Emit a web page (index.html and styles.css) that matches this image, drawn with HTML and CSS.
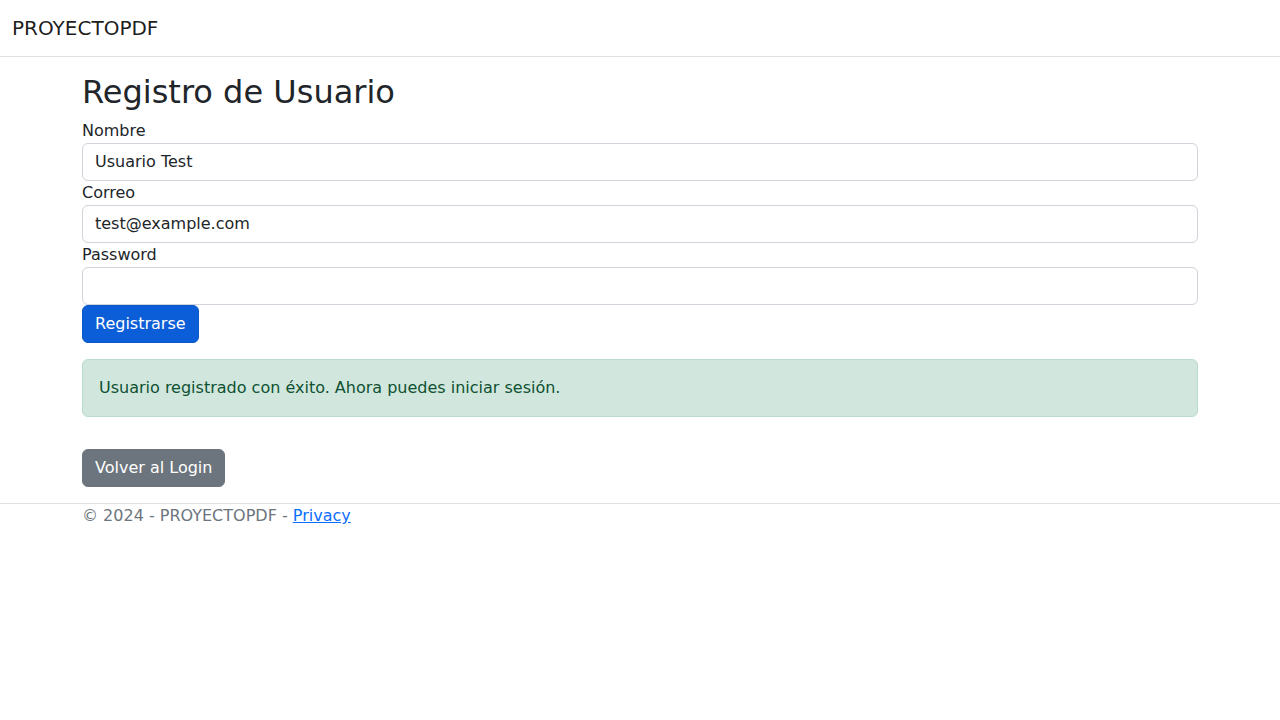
FILE: index.html
```html
<!DOCTYPE html>
<html lang="es">
<head>
<meta charset="utf-8">
<title>Registro de Usuario - PROYECTOPDF</title>
<link rel="stylesheet" href="styles.css">
</head>
<body>
<header class="site-header">
  <nav class="navbar">
    <a class="brand" href="#">PROYECTOPDF</a>
  </nav>
</header>
<div class="container">
  <main class="main">
    <h2 class="title">Registro de Usuario</h2>
    <form class="form">
      <div class="field">
        <label class="label">Nombre</label>
        <input class="input" type="text" value="Usuario Test">
      </div>
      <div class="field">
        <label class="label">Correo</label>
        <input class="input" type="email" value="test@example.com">
      </div>
      <div class="field">
        <label class="label">Password</label>
        <input class="input" type="password" value="">
      </div>
      <div class="actions">
        <button type="button" class="btn btn-primary">Registrarse</button>
      </div>
    </form>
    <div class="alert">Usuario registrado con éxito. Ahora puedes iniciar sesión.</div>
    <div class="back">
      <a class="btn btn-secondary" href="#">Volver al Login</a>
    </div>
  </main>
</div>
<footer class="footer">
  <div class="container">© 2024 - PROYECTOPDF - <a href="#" class="link">Privacy</a></div>
</footer>
</body>
</html>
```
FILE: styles.css
```css
* { box-sizing: border-box; }
html, body { margin: 0; padding: 0; }
body {
  font-family: "DejaVu Sans", "Noto Sans", sans-serif;
  font-size: 16px;
  line-height: 1.5;
  color: #212529;
  background: #fff;
}
.site-header { margin-bottom: 16px; }
.navbar {
  display: flex;
  align-items: center;
  padding: 8px 12px;
  border-bottom: 1px solid #dee2e6;
  background: #fff;
}
.brand {
  font-size: 20px;
  line-height: 30px;
  padding: 5px 0;
  color: rgba(0,0,0,.9);
  text-decoration: none;
}
.container {
  max-width: 1140px;
  margin: 0 auto;
  padding: 0 12px;
}
.main { padding-bottom: 16px; }
.title {
  font-size: 32px;
  font-weight: 500;
  line-height: 1.2;
  margin: 0 0 8px;
}
.form { margin: 0; }
.field { display: flex; flex-direction: column; }
.label { display: block; }
.input {
  display: block;
  width: 100%;
  font: inherit;
  font-size: 16px;
  line-height: 24px;
  padding: 6px 12px;
  color: #212529;
  background: #fff;
  border: 1px solid #ced4da;
  border-radius: 6px;
}
.actions { display: flex; }
.btn {
  display: inline-block;
  font: inherit;
  font-size: 16px;
  line-height: 24px;
  padding: 6px 12px;
  border: 1px solid transparent;
  border-radius: 6px;
  color: #fff;
  text-decoration: none;
  cursor: pointer;
}
.btn-primary { background: #0b5ed7; border-color: #0a58ca; }
.btn-secondary { background: #6c757d; border-color: #6c757d; }
.alert {
  margin: 16px 0;
  padding: 16px;
  border: 1px solid #badbcc;
  border-radius: 6px;
  background: #d1e7dd;
  color: #0f5132;
}
.back { padding-top: 16px; }
.footer {
  border-top: 1px solid #dee2e6;
  color: #6c757d;
}
.link { color: #0d6efd; text-decoration: underline; }
```
